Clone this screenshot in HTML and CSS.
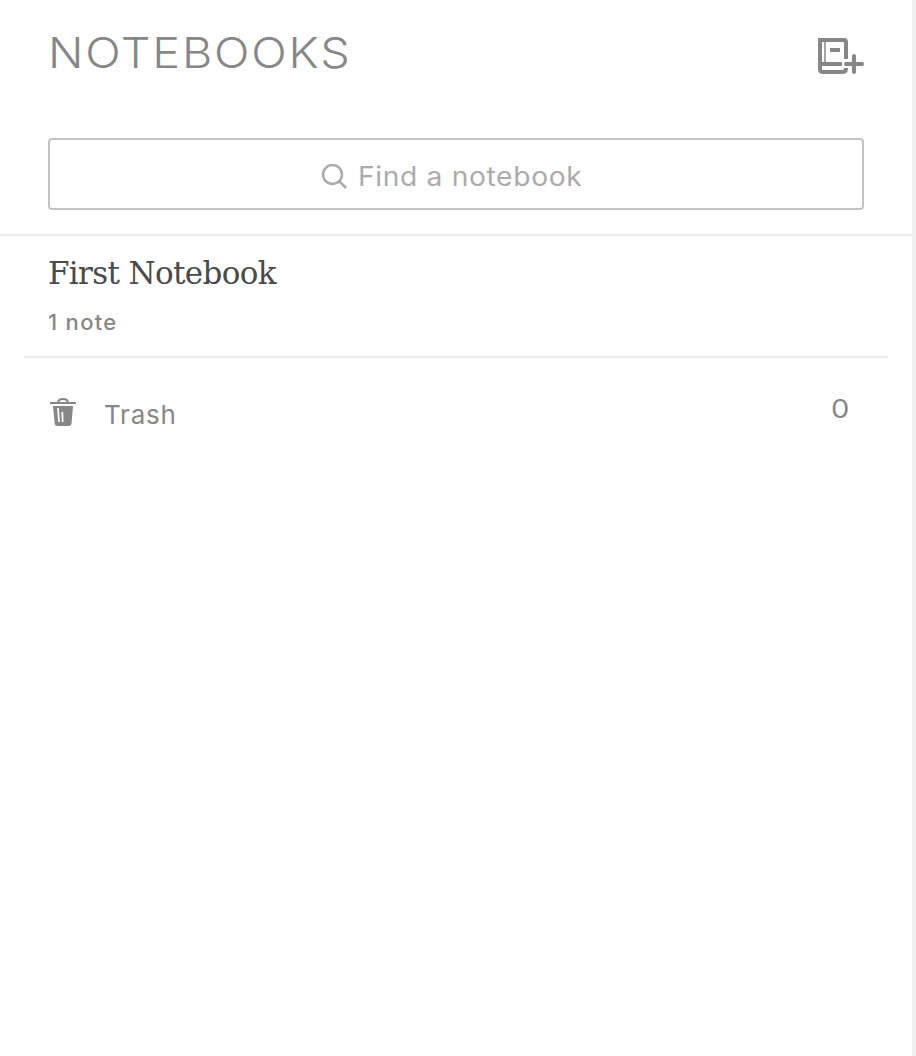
FILE: index.html
```html
<!DOCTYPE html>
<html lang="en">
<head>
<meta charset="utf-8">
<title>Notebooks</title>
<link rel="stylesheet" href="styles.css">
</head>
<body>
<main class="panel">
  <header class="header">
    <div class="title-row">
      <h1 class="title">NOTEBOOKS</h1>
      <svg class="add" width="48" height="38" viewBox="0 0 48 38" fill="none" stroke="#878787">
        <path d="M2 2H28Q30 2 30 4V21M4 2V31Q4 34 7 34H26Q30 34 30 31V30" stroke-width="4"/>
        <path d="M9 3V26" stroke-width="1.500"/>
        <path d="M4 26H26" stroke-width="4"/>
        <path d="M14 12H24" stroke-width="4"/>
        <path d="M30 26H46M38 18V34" stroke-width="4" stroke-linecap="round"/>
      </svg>
    </div>
    <div class="search">
      <svg class="lens" width="26" height="26" viewBox="0 0 26 26" fill="none" stroke="#ababab" stroke-width="2.500">
        <circle cx="11.500" cy="10.500" r="9.500"/><path d="M18 17L25 24"/>
      </svg>
      <span class="hint">Find a notebook</span>
    </div>
  </header>
  <section class="notebook">
    <h2 class="name">First Notebook</h2>
    <p class="count">1 note</p>
  </section>
  <section class="trash">
    <svg class="bin" width="26" height="30" viewBox="0 0 26 30">
      <path d="M8 5Q8 1 13 1T18 5" fill="none" stroke="#878787" stroke-width="2"/>
      <path d="M0 4H26V6H0ZM3 8H23L21.500 25.500Q21.300 28 18.500 28H8Q5 28 4.700 25.500Z" fill="#878787"/>
      <path d="M8 10L9 24M12.300 14L12.700 24" fill="none" stroke="#fff" stroke-width="1.700"/>
    </svg>
    <span class="label">Trash</span>
    <span class="total">0</span>
  </section>
</main>
</body>
</html>
```
FILE: styles.css
```css
* { box-sizing: border-box; }
body { margin: 0; background: #fff; color: #878787; font-family: Inter, "Open Sans", sans-serif; }
.panel { height: 1056px; border-right: 4px solid #f0f0f0; }
.header { height: 236px; padding: 30px 48px 0; border-bottom: 2px solid #ebebeb; }
.title-row { display: flex; justify-content: space-between; height: 108px; }
.title { margin: 0; font-size: 42.5px; line-height: 46px; font-weight: 300; letter-spacing: 1.6px; white-space: nowrap; transform: scaleX(1.1); transform-origin: left; }
.add { margin: 8px 0 0; }
.search { display: flex; width: 816px; height: 72px; border: 2px solid #c3c3c3; border-radius: 4px; padding: 24px 0 0 271px; }
.lens { flex: none; margin-right: 10px; }
.hint { color: #ababab; margin: -4px 0 0 1px; font-size: 26.5px; line-height: 32px; letter-spacing: 0.6px; white-space: nowrap; transform: scaleX(1.065); transform-origin: left; }
.notebook { height: 122px; margin: 0 24px; padding: 17px 24px 0; border-bottom: 2px solid #ebebeb; }
.name { margin: 0; color: #4a4a4a; font: 400 31px/40px "DejaVu Serif", serif; letter-spacing: -0.65px; white-space: nowrap; }
.count { margin: 15px 0 0; font-size: 22px; line-height: 28px; font-weight: 500; letter-spacing: 1.3px; }
.trash { display: flex; padding: 40px 63px 0 50px; font-size: 26px; line-height: 32px; }
.label { margin: 1px 0 0 28px; letter-spacing: 0.8px; }
.total { margin: -5px 0 0 auto; width: 18px; transform: scaleX(1.12); transform-origin: left; }
```
